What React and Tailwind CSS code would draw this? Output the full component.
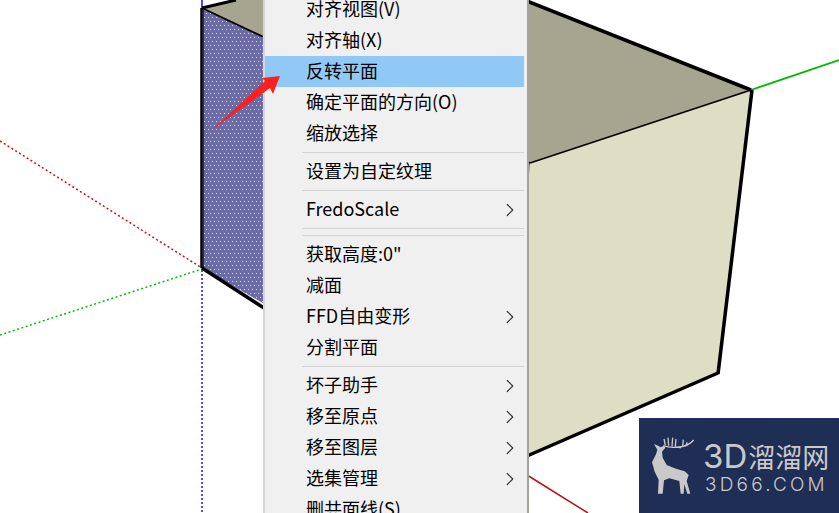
import { ChevronRight } from "lucide-react";

const rows = [
    { label: "对齐视图(V)" },
    { label: "对齐轴(X)" },
    { label: "反转平面", active: true },
    { label: "确定平面的方向(O)" },
    { label: "缩放选择" },
    { sep: true },
    { label: "设置为自定纹理" },
    { sep: true },
    { label: "FredoScale", sub: true },
    { sep: true },
    { sep: true },
    { label: "获取高度:0\"" },
    { label: "减面" },
    { label: "FFD自由变形", sub: true },
    { label: "分割平面" },
    { sep: true },
    { label: "坏子助手", sub: true },
    { label: "移至原点", sub: true },
    { label: "移至图层", sub: true },
    { label: "选集管理", sub: true },
    { label: "删共面线(S)" },
];

function Scene() {
    return (
        <svg className="absolute inset-0" width="839" height="513" viewBox="0 0 839 513">
            <defs>
                <pattern id="dots" width="4" height="8" patternUnits="userSpaceOnUse">
                    <rect width="4" height="8" fill="#6b6ba6" />
                    <rect x="0" y="1" width="1" height="1" fill="#ffff40" />
                    <rect x="2" y="5" width="1" height="1" fill="#ffff40" />
                </pattern>
            </defs>

            {/* axes */}
            <line x1="0" y1="141" x2="202" y2="268" stroke="#d01010" strokeWidth="1.5" strokeDasharray="2 2.5" />
            <line x1="0" y1="335" x2="202" y2="269" stroke="#00c000" strokeWidth="1.5" strokeDasharray="2 2.5" />
            <line x1="202" y1="270" x2="202" y2="513" stroke="#1010e0" strokeWidth="1.5" strokeDasharray="2 2" />
            <line x1="202" y1="0" x2="202" y2="8" stroke="#1010e0" strokeWidth="1.5" />
            <line x1="751" y1="90" x2="839" y2="60" stroke="#00b800" strokeWidth="1.8" />
            <line x1="527" y1="475" x2="588" y2="513" stroke="#c01010" strokeWidth="1.5" />

            {/* faces */}
            <polygon points="202,8 530,163 527,456 202,268" fill="url(#dots)" />
            <polygon points="202,8 235,0 527,0 751,90 530,163" fill="#a5a590" />
            <polygon points="530,163 751,90 718,373 527,456 527,200" fill="#dedec4" />

            {/* edges */}
            <line x1="202" y1="8" x2="236" y2="0" stroke="#000" strokeWidth="3" />
            <line x1="202" y1="8" x2="530" y2="163" stroke="#000" strokeWidth="1.8" />
            <line x1="527" y1="1" x2="751" y2="90" stroke="#000" strokeWidth="3.5" />
            <line x1="751" y1="90" x2="530" y2="163" stroke="#000" strokeWidth="1.8" />
            <line x1="752" y1="90" x2="718" y2="374" stroke="#000" strokeWidth="3.5" />
            <line x1="718" y1="373" x2="527" y2="456" stroke="#000" strokeWidth="3.5" />
            <line x1="201.5" y1="8" x2="201.5" y2="268" stroke="#000" strokeWidth="2.5" />
            <line x1="203.5" y1="10" x2="203.5" y2="268" stroke="#1c1ca8" strokeWidth="1" />
            <line x1="202" y1="268" x2="264" y2="308" stroke="#000" strokeWidth="3.5" />
        </svg>
    );
}

function Menu() {
    return (
        <div className="absolute top-0 bottom-0 left-[263px] w-[266px] overflow-hidden bg-[#f0f0f0] border-l-2 border-r-2 border-l-[#d6d6d6] border-r-[#a3a39a]">
            <div className="flex flex-col -mt-[6px] w-[259px]">
                {rows.map((row, i) =>
                    row.sep ? (
                        <div key={i} className="h-[7px] flex items-center pl-[37px]">
                            <div className="w-full h-px bg-[#d4d4d4]" />
                        </div>
                    ) : (
                        <div
                            key={i}
                            className={`h-[31px] shrink-0 flex items-center justify-between pl-[41px] pr-[3px] text-[18px] leading-none text-black ${row.active ? "bg-[#90c8f6]" : ""}`}
                        >
                            <span className="pb-[3px]">{row.label}</span>
                            {row.sub && <ChevronRight size={22} strokeWidth={1.3} className="text-[#333]" />}
                        </div>
                    )
                )}
            </div>
        </div>
    );
}

function Arrow() {
    return (
        <svg className="absolute inset-0" width="839" height="513" viewBox="0 0 839 513">
            <polygon points="212,130 265,81 262,78 280,76 273,94 270,88" fill="#fb2020" />
        </svg>
    );
}

function Deer() {
    return (
        <svg width="70" height="88" viewBox="0 0 210 264" fill="none" className="shrink-0">
            <path
                d="M42 57 L54 62 L62 67 L72 62 L76 68 L66 80 L68 98 L80 120 L108 131 L134 139 L146 150 L140 168 L151 206 L142 206 L133 178 L131 206 L122 206 L118 168 L88 160 L72 166 L68 206 L54 206 L56 164 L44 140 L36 112 L48 88 L52 74 Z"
                fill="#c9c9c9"
            />
            <path
                d="M70 62 Q90 70 118 66 Q145 64 161 45 M72 42 L76 60 M84 38 L86 62 M98 38 L96 64 M108 42 L106 64 M130 44 L128 64 M118 66 L122 70 M136 64 L142 52"
                stroke="#c9c9c9"
                strokeWidth="4"
            />
        </svg>
    );
}

function Logo() {
    return (
        <div className="absolute left-[639px] top-[418px] w-[200px] h-[95px] bg-[#1f2e55] flex items-start pl-[1px] pt-[7px] text-[#c9c9c9]">
            <Deer />
            <div className="flex flex-col ml-[-5px] pt-[13px]">
                <div className="flex items-center h-[36px] leading-none">
                    <span className="text-[33px] font-normal font-['Inter'] ml-[-2px]">3D</span>
                    <span className="text-[27px] font-normal ml-[1px]">溜溜网</span>
                </div>
                <div className="mt-[1px] text-[19px] leading-[20px] font-light font-['Inter'] tracking-[3.2px]">3D66.COM</div>
            </div>
        </div>
    );
}

export default function App() {
    return (
        <div className="relative w-[839px] h-[513px] overflow-hidden bg-white font-['Noto_Sans_CJK_SC','Noto_Sans',sans-serif]">
            <Scene />
            <Menu />
            <Arrow />
            <Logo />
        </div>
    );
}
